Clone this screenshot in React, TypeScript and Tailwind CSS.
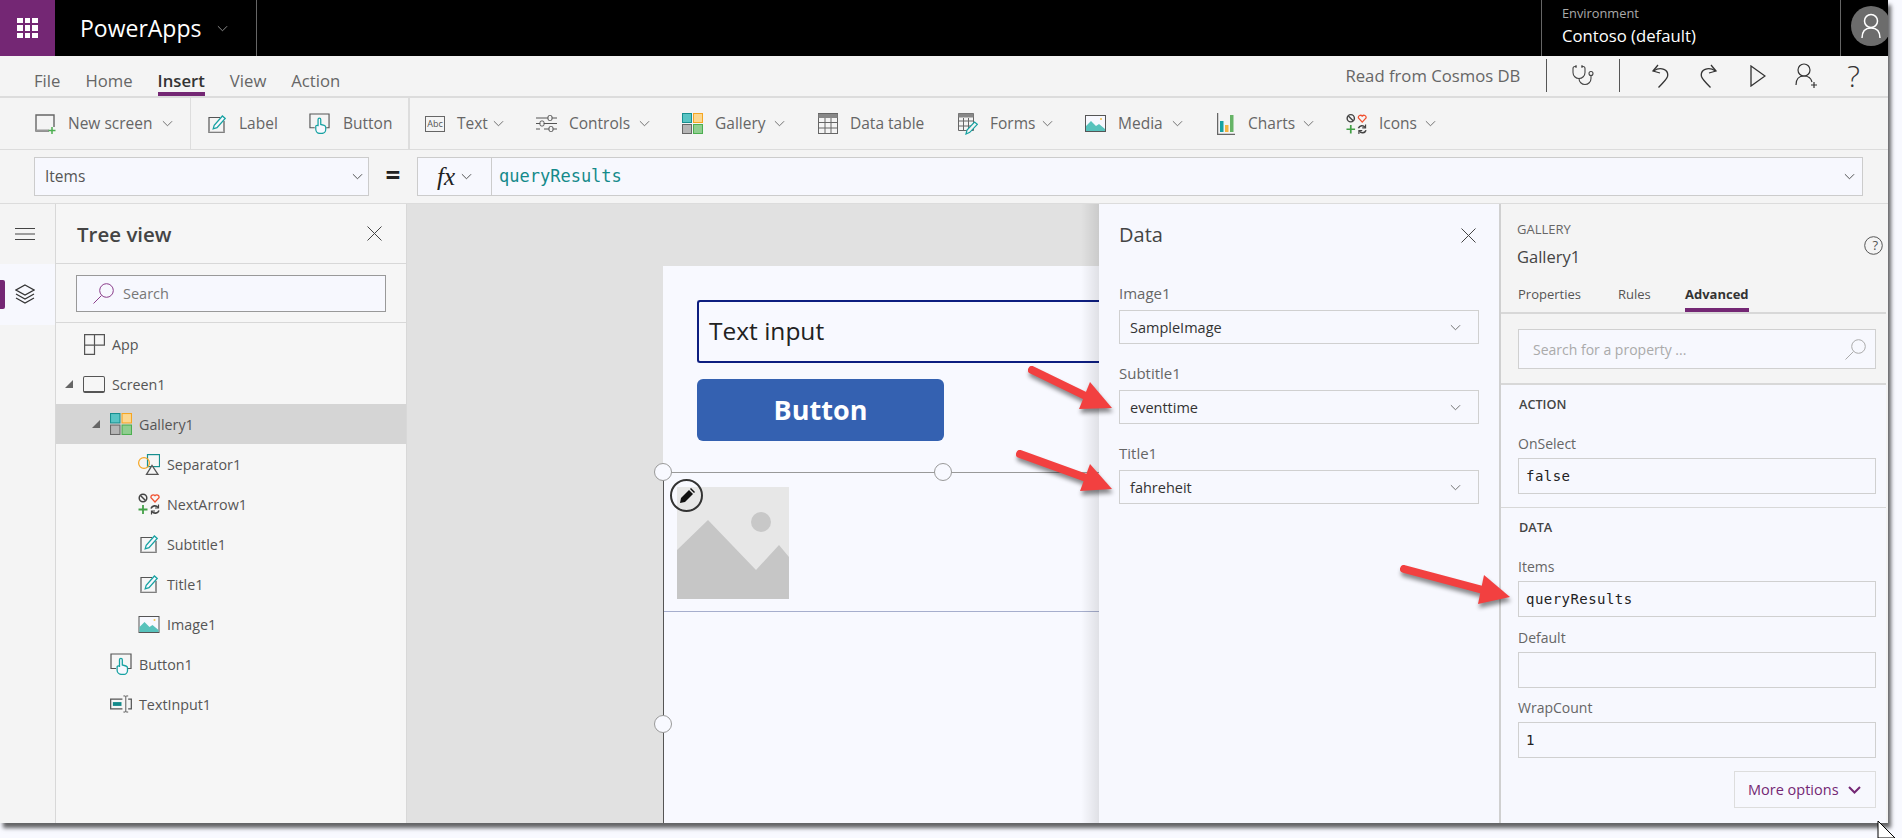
import { Stethoscope } from "lucide-react";
import type { ReactNode } from "react";

const Chev = ({ className = "", stroke = "#666" }: { className?: string; stroke?: string }) => (
  <svg className={className} width="11" height="7" viewBox="0 0 12 7" fill="none">
    <path d="M1 1l5 5 5-5" stroke={stroke} strokeWidth="1" />
  </svg>
);

const CloseX = () => (
  <svg width="15" height="15" viewBox="0 0 15 15" fill="none">
    <path d="M.5.5l14 14M14.5.5l-14 14" stroke="#444" strokeWidth="1" />
  </svg>
);

const NewScreenIcon = () => (
  <svg width="21" height="20" viewBox="0 0 21 20" fill="none">
    <path d="M14 17H1V1h18v12" stroke="#666" strokeWidth="1.4" />
    <path d="M1 16.5h13" stroke="#999" strokeWidth="2" />
    <path d="M17 13v7M13.5 16.5h7" stroke="#4caf50" strokeWidth="1.5" />
  </svg>
);

const EditIcon = ({ size = 18 }: { size?: number }) => (
  <svg width={size} height={size} viewBox="0 0 18 18" fill="none">
    <path d="M12 2.5H1v15h15V6" stroke="#555" strokeWidth="1.2" />
    <path d="M1 17h15" stroke="#aaa" strokeWidth="1" />
    <path d="M5.2 13.8l1-3.6L14.4 1l2.8 2.4-8.2 9.2z" stroke="#17a2a2" strokeWidth="1.3" fill="#f7f8fe" />
  </svg>
);

const HandIcon = ({ size = 22 }: { size?: number }) => (
  <svg width={size} height={size} viewBox="0 0 22 22" fill="none">
    <path d="M6 15.5H1V1h20v14.5h-3" stroke="#555" strokeWidth="1.2" />
    <path
      d="M9.5 14V6.8a1.4 1.4 0 012.8 0V12l3.6 1c1 .3 1.6 1 1.6 2v2.4a4 4 0 01-4 4h-2a4.4 4.4 0 01-4.4-4.4v-3c0-.8.8-1.3 2.4-1z"
      stroke="#17a2a2"
      strokeWidth="1.3"
      fill="#f7f8fe"
    />
  </svg>
);

const AbcIcon = () => (
  <span className="flex h-[16px] w-[21px] items-center justify-center border border-[#666] text-[9px] leading-none text-[#555]">
    Abc
  </span>
);

const SlidersIcon = () => (
  <svg width="21" height="21" viewBox="0 0 21 21" fill="none" stroke="#555" strokeWidth="1">
    <path d="M0 5h12M16 5h5M0 10.500h21M0 16h4M8 16h13" />
    <rect x="12" y="2.500" width="4" height="5" rx="1.500" fill="#f4f4f4" />
    <rect x="4" y="8" width="4" height="5" rx="1.500" fill="#f4f4f4" />
    <rect x="13" y="13.500" width="4" height="5" rx="1.500" fill="#f4f4f4" />
  </svg>
);

const GalleryIcon = ({ size = 21 }: { size?: number }) => (
  <svg width={size} height={size} viewBox="0 0 21 21">
    <rect x=".5" y=".5" width="9" height="9" fill="#58c4c4" stroke="#178f8f" />
    <rect x="11.500" y=".5" width="9" height="9" fill="#fcd78f" stroke="#f5a623" />
    <rect x=".5" y="11.500" width="9" height="9" fill="#b5b5b5" stroke="#666" />
    <rect x="11.500" y="11.500" width="9" height="9" fill="#8fce8f" stroke="#4caf50" />
  </svg>
);

const TableIcon = () => (
  <svg width="20" height="21" viewBox="0 0 20 21" fill="none" stroke="#666" strokeWidth="1">
    <rect x=".5" y=".5" width="19" height="20" />
    <path d="M.5 3h19" strokeWidth="4" stroke="#888" />
    <path d="M.5 9.500h19M.5 15h19M7 5v15M13 5v15" />
  </svg>
);

const FormsIcon = () => (
  <svg width="20" height="22" viewBox="0 0 20 22" fill="none">
    <path d="M.5.5h15v17H.5z" stroke="#666" />
    <path d="M.5 2.500h15" stroke="#888" strokeWidth="4" />
    <path d="M.5 8h15M.5 13h15M5.500 5v12M10.500 5v12" stroke="#666" />
    <path d="M8 21l1-4 7.500-8 2.800 2.300-7.500 8z" stroke="#17a2a2" strokeWidth="1.200" fill="#f4f4f4" />
  </svg>
);

const ImageIcon = ({ w = 21, h = 17 }: { w?: number; h?: number }) => (
  <svg width={w} height={h} viewBox="0 0 21 17">
    <rect x=".5" y=".5" width="20" height="16" fill="#f7f8fe" stroke="#555" />
    <path d="M1 16V11l5-5 5 5 3-2 6 5v2z" fill="#57c2bc" />
    <circle cx="16" cy="4" r="1" fill="#f5c04a" />
  </svg>
);

const ChartIcon = () => (
  <svg width="18" height="22" viewBox="0 0 18 22">
    <path d="M.5 0v21.500H18" fill="none" stroke="#666" strokeWidth="1.500" />
    <rect x="3" y="8" width="3.500" height="11" fill="#17a2a2" />
    <rect x="8" y="12" width="3.500" height="7" fill="#f5b342" />
    <rect x="13" y="2" width="3.500" height="17" fill="#66b466" />
  </svg>
);

const IconsIcon = ({ size = 22 }: { size?: number }) => (
  <svg width={size} height={size} viewBox="0 0 22 22" fill="none">
    <circle cx="5" cy="5" r="3.800" stroke="#444" strokeWidth="1.500" />
    <path d="M2.500 2.500l5 5" stroke="#444" strokeWidth="1.500" />
    <path d="M17 9l-4-4.300a2.300 2.300 0 014-2 2.300 2.300 0 014 2z" stroke="#f0502f" strokeWidth="1.300" />
    <path d="M5 12v9M.5 16.500h9" stroke="#43a047" strokeWidth="1.800" />
    <path d="M13 15.500a4 4 0 017-1M21 17.500a4 4 0 01-7 1" stroke="#444" strokeWidth="1.600" />
    <path d="M20.500 11.500v3.500h-3.500M13.500 21.500V18h3.500" stroke="#444" strokeWidth="1.200" />
  </svg>
);

const AppIcon = () => (
  <svg width="21" height="21" viewBox="0 0 21 21" fill="none" stroke="#555" strokeWidth="1.200">
    <path d="M.6.6h19.800v10.500H10.500v9.300H.6zM.6 11.100h9.900M10.500.6v10.500" />
  </svg>
);

const ScreenIcon = () => (
  <span className="block h-[17px] w-[22px] rounded-[2px] border border-[#555] border-b-2" />
);

const ShapesIcon = () => (
  <svg width="22" height="21" viewBox="0 0 22 21" fill="none">
    <rect x="9.500" y=".6" width="12" height="12" stroke="#178f8f" strokeWidth="1.200" fill="#f6f6f6" />
    <circle cx="6" cy="9" r="5.400" stroke="#f5a623" strokeWidth="1.200" />
    <path d="M8.500 20.400l5.500-9 6 9z" stroke="#555" strokeWidth="1.300" fill="#f6f6f6" />
  </svg>
);

const TextInputIcon = () => (
  <svg width="23" height="18" viewBox="0 0 23 18" fill="none">
    <path d="M13 4H.7v10H13M19 4h3.300v10H19" stroke="#555" strokeWidth="1.300" />
    <rect x="3" y="7" width="9" height="4" fill="#138a8a" />
    <path d="M14 .6h2l.5.5.5-.5h2M16.500 1v16M14 17.400h2l.5-.5.5.5h2" stroke="#555" strokeWidth="1" />
  </svg>
);

const Magnifier = ({ stroke, size = 21 }: { stroke: string; size?: number }) => (
  <svg width={size} height={size} viewBox="0 0 21 21" fill="none" stroke={stroke} strokeWidth="1">
    <circle cx="13.500" cy="7.500" r="6.800" />
    <path d="M8.500 12.500L.5 20.500" />
  </svg>
);

const toolItems: { icon: ReactNode; label: string; text: string; chev: boolean; iconBox: string }[] = [
  { icon: <AbcIcon />, label: "Text", text: "w-[29px]", chev: true, iconBox: "w-[20px]" },
  { icon: <SlidersIcon />, label: "Controls", text: "w-[63px]", chev: true, iconBox: "w-[21px]" },
  { icon: <GalleryIcon />, label: "Gallery", text: "w-[52px]", chev: true, iconBox: "w-[21px]" },
  { icon: <TableIcon />, label: "Data table", text: "w-[76px]", chev: false, iconBox: "w-[21px]" },
  { icon: <FormsIcon />, label: "Forms", text: "w-[45px]", chev: true, iconBox: "w-[20px]" },
  { icon: <ImageIcon />, label: "Media", text: "w-[47px]", chev: true, iconBox: "w-[21px]" },
  { icon: <ChartIcon />, label: "Charts", text: "w-[48px]", chev: true, iconBox: "w-[21px]" },
  { icon: <IconsIcon />, label: "Icons", text: "w-[39px]", chev: true, iconBox: "w-[21px]" },
];

const treeRows: { name: string; pad: string; icon: ReactNode; open?: boolean; selected?: boolean }[] = [
  { name: "App", pad: "pl-[9px]", icon: <AppIcon /> },
  { name: "Screen1", pad: "pl-[9px]", icon: <ScreenIcon />, open: true },
  { name: "Gallery1", pad: "pl-[36px]", icon: <GalleryIcon size={22} />, open: true, selected: true },
  { name: "Separator1", pad: "pl-[64px]", icon: <ShapesIcon /> },
  { name: "NextArrow1", pad: "pl-[64px]", icon: <IconsIcon /> },
  { name: "Subtitle1", pad: "pl-[64px]", icon: <EditIcon /> },
  { name: "Title1", pad: "pl-[64px]", icon: <EditIcon /> },
  { name: "Image1", pad: "pl-[64px]", icon: <ImageIcon w={22} h={17} /> },
  { name: "Button1", pad: "pl-[36px]", icon: <HandIcon /> },
  { name: "TextInput1", pad: "pl-[36px]", icon: <TextInputIcon /> },
];

const DataSelect = ({ label, value, top }: { label: string; value: string; top: string }) => (
  <div className={top}>
    <div className="h-[20px] text-[15px] leading-[19px] text-[#666]">{label}</div>
    <div className="mt-[6px] flex h-[34px] items-center justify-between border border-[#d0d0d0] pl-[10px] pr-[17px] text-[14.500px] text-[#333]">
      <span className="pt-[1px]">{value}</span>
      <Chev />
    </div>
  </div>
);

const PropField = ({ label, value, top }: { label: string; value?: string; top: string }) => (
  <div className={top}>
    <div className="h-[18px] text-[14px] leading-[18px] text-[#666]">{label}</div>
    <div className="mt-[5px] flex h-[36px] items-center border border-[#d0d0d0] pl-[7px] font-['DejaVu_Sans_Mono',monospace] text-[14px] tracking-[0.45px] text-[#222]">
      {value}
    </div>
  </div>
);

const Arrow = ({ className, width, height, tail, tip, a, b }: {
  className: string;
  width: number;
  height: number;
  tail: [number, number];
  tip: [number, number];
  a: [number, number];
  b: [number, number];
}) => {
  const mid: [number, number] = [(a[0] + b[0]) / 2, (a[1] + b[1]) / 2];
  return (
    <svg
      className={`absolute drop-shadow-[1px_4px_2px_rgba(0,0,0,0.45)] ${className}`}
      width={width}
      height={height}
      viewBox={`0 0 ${width} ${height}`}
      fill="none"
    >
      <path d={`M${tail[0]} ${tail[1]}L${mid[0]} ${mid[1]}`} stroke="#f24040" strokeWidth="8" strokeLinecap="round" />
      <path d={`M${a[0]} ${a[1]}L${tip[0]} ${tip[1]}L${b[0]} ${b[1]}z`} fill="#f24040" />
    </svg>
  );
};

const Handle = ({ className }: { className: string }) => (
  <span className={`absolute h-[18px] w-[18px] rounded-full border border-[#999] bg-[#f8f9ff] ${className}`} />
);

export default function App() {
  return (
    <div className="relative h-[838px] w-[1902px] overflow-hidden bg-[#f8f9ff] font-['Open_Sans',sans-serif]">
      <div className="flex h-[823px] w-[1888px] flex-col bg-[#f4f4f4] shadow-[3px_5px_4px_rgba(0,0,0,0.6)]">
        {/* top bar */}
        <header className="flex h-14 shrink-0 bg-black text-white">
          <div className="flex w-[55px] items-center justify-center bg-[#742774]">
            <div className="grid grid-cols-3 gap-[2px]">
              {Array.from({ length: 9 }).map((_, i) => (
                <span key={i} className="h-[5.500px] w-[5.500px] bg-white" />
              ))}
            </div>
          </div>
          <div className="flex w-[202px] items-center border-r border-[#666] pl-[25px]">
            <span className="text-[23px] leading-none">PowerApps</span>
            <Chev className="ml-[16px]" stroke="#999" />
          </div>
          <div className="ml-auto flex w-[300px] flex-col border-x border-[#666] pl-[20px]">
            <span className="mt-[4px] text-[12.800px] leading-[18px] text-[#aaa]">Environment</span>
            <span className="mt-[3px] text-[16.700px] leading-[22px]">Contoso (default)</span>
          </div>
          <div className="w-[47px] overflow-hidden pl-[10px] pt-[6px]">
            <div className="flex h-10 w-10 items-center justify-center rounded-full bg-[#6c6c6c]">
              <svg width="20" height="26" viewBox="0 0 20 26" fill="none" stroke="#fff" strokeWidth="1.500">
                <circle cx="10" cy="8" r="6.500" />
                <path d="M1 25c0-6 3-10 9-10s9 4 9 10" />
              </svg>
            </div>
          </div>
        </header>

        {/* menu row */}
        <div className="flex h-[42px] shrink-0 justify-between border-b-2 border-[#dcdcdc] pl-[34px] pr-[28px]">
          <nav className="flex gap-[25px] pt-[14px] text-[16.700px] text-[#666]">
            {["File", "Home", "Insert", "View", "Action"].map((t) => (
              <div key={t} className="flex flex-col">
                <span className={`h-[22px] leading-[22px] ${t === "Insert" ? "font-semibold text-[#333]" : ""}`}>{t}</span>
                <span className={`h-1 ${t === "Insert" ? "bg-[#742774]" : ""}`} />
              </div>
            ))}
          </nav>
          <div className="mt-[3px] flex h-[33px] items-center text-[#444]">
            <span className="mr-[26px] text-[16.700px] text-[#666]">Read from Cosmos DB</span>
            <span className="h-[33px] w-px bg-[#555]" />
            <Stethoscope className="mx-[24px] h-[25px] w-[24px]" strokeWidth={1.100} />
            <span className="h-[33px] w-px bg-[#555]" />
            <svg className="ml-[31px]" width="18" height="24" viewBox="0 0 18 24" fill="none" stroke="#333" strokeWidth="1.300">
              <path d="M7 1L2 7l7 2" />
              <path d="M2.500 7C10 2 18 6 16.500 12.500 15.800 15 12 19 7.500 23.500" />
            </svg>
            <svg className="ml-[31px]" width="18" height="24" viewBox="0 0 18 24" fill="none" stroke="#333" strokeWidth="1.300">
              <path d="M11 1l5 6-7 2" />
              <path d="M15.500 7C8 2 0 6 1.500 12.500 2.200 15 6 19 10.500 23.500" />
            </svg>
            <svg className="ml-[32px]" width="16" height="22" viewBox="0 0 16 22" fill="none" stroke="#333" strokeWidth="1.300">
              <path d="M1 1l14 10L1 21z" />
            </svg>
            <svg className="ml-[29px]" width="23" height="26" viewBox="0 0 23 26" fill="none" stroke="#333" strokeWidth="1.200">
              <circle cx="9" cy="7" r="6" />
              <path d="M1 22c0-6 3-9 8-9s7 2 8 6" />
              <path d="M19 19v6M16 22h6" />
            </svg>
            <span className="ml-[29px] text-[30px] font-light leading-none text-[#333]">?</span>
          </div>
        </div>

        {/* toolbar */}
        <div className="flex h-[52px] shrink-0 items-stretch border-b border-[#dcdcdc] text-[15.500px] text-[#666]">
          <div className="flex w-[191px] items-center gap-[12px] border-r border-[#ddd] pl-[35px]">
            <NewScreenIcon />
            <span className="flex w-[87px] items-center whitespace-nowrap">New screen</span>
            <Chev className="-ml-[5px]" />
          </div>
          <div className="flex w-[219px] items-center border-r-2 border-[#ddd] pl-[17px]">
            <EditIcon />
            <span className="ml-[13px] w-[38px]">Label</span>
            <span className="ml-[32px]"><HandIcon size={21} /></span>
            <span className="ml-[13px] w-[49px]">Button</span>
          </div>
          <div className="flex items-center gap-[32px] pl-[15px]">
            {toolItems.map((item) => (
              <div key={item.label} className="flex items-center">
                <span className={`flex shrink-0 justify-center ${item.iconBox}`}>{item.icon}</span>
                <span className={`ml-[12px] whitespace-nowrap ${item.text}`}>{item.label}</span>
                {item.chev && <Chev className="ml-[7px]" />}
              </div>
            ))}
          </div>
        </div>

        {/* formula bar */}
        <div className="flex h-[54px] shrink-0 items-start border-b border-[#dcdcdc] pl-[34px] pr-[25px] pt-[7px]">
          <div className="flex h-[39px] w-[335px] items-center justify-between border border-[#ccc] bg-[#f7f8fe] pl-[10px] pr-[5px] text-[15.500px] text-[#555]">
            <span>Items</span>
            <Chev stroke="#444" />
          </div>
          <div className="flex h-[39px] w-[48px] items-center justify-center pb-[2px] text-[26px] font-bold text-[#222]">=</div>
          <div className="flex h-[39px] flex-1 border border-[#ccc] bg-[#f7f8fe]">
            <div className="flex w-[74px] items-center justify-center gap-[6px] border-r border-[#ccc]">
              <span className="font-['Liberation_Serif',serif] text-[25px] italic leading-none text-[#222]">fx</span>
              <Chev stroke="#444" />
            </div>
            <div className="flex flex-1 items-center justify-between px-[7px]">
              <span className="font-['DejaVu_Sans_Mono',monospace] text-[17px] text-[#148a8a]">queryResults</span>
              <Chev stroke="#444" />
            </div>
          </div>
        </div>

        {/* main */}
        <div className="flex min-h-0 flex-1">
          <aside className="w-[56px] shrink-0 border-r border-[#d8d8d8]">
            <div className="flex h-[60px] items-center justify-center">
              <svg className="ml-[10px] mr-[16px]" width="20" height="12" viewBox="0 0 20 12" stroke="#444" strokeWidth="1">
                <path d="M0 .5h20M0 6h20M0 11.500h20" />
              </svg>
            </div>
            <div className="flex h-[61px] items-center bg-[#f7f8fe]">
              <span className="h-[29px] w-[5px] rounded-r-[2px] bg-[#742774]" />
              <svg className="ml-[10px]" width="20" height="24" viewBox="0 0 20 24" fill="none" stroke="#333" strokeWidth="1.200">
                <path d="M10 2l9 5-9 5-9-5z" />
                <path d="M1 11l9 5 9-5M1 15l9 5 9-5" />
              </svg>
            </div>
          </aside>

          <section className="w-[351px] shrink-0 border-r border-[#d8d8d8] bg-[#f6f6f6]">
            <div className="flex h-[60px] items-center justify-between border-b border-[#d8d8d8] pl-[21px] pr-[24px]">
              <span className="pt-[2px] text-[20.500px] font-semibold text-[#444]">Tree view</span>
              <CloseX />
            </div>
            <div className="h-[59px] border-b border-[#d8d8d8] px-[20px] pt-[11px]">
              <div className="flex h-[37px] items-center border border-[#999] bg-[#f7f8fe] pl-[16px] text-[14.500px] text-[#777]">
                <Magnifier stroke="#8a3c8a" />
                <span className="ml-[9px] pt-[1px]">Search</span>
              </div>
            </div>
            <ul className="pt-[1px] text-[14.300px] text-[#555]">
              {treeRows.map((row) => (
                <li
                  key={row.name}
                  className={`flex h-10 items-center ${row.pad} ${row.selected ? "bg-[#d5d5d5]" : ""}`}
                >
                  <span className="flex w-[18px] shrink-0">
                    {row.open && <span className="h-0 w-0 border-b-[8px] border-l-[8px] border-b-[#666] border-l-transparent" />}
                  </span>
                  <span className="flex w-[22px] shrink-0 justify-center">{row.icon}</span>
                  <span className="ml-[7px] pt-[1px]">{row.name}</span>
                </li>
              ))}
            </ul>
          </section>

          {/* canvas */}
          <main className="relative w-[692px] shrink-0 overflow-hidden bg-[#e1e1e1] pl-[256px] pt-[62px]">
            <div className="h-full bg-[#f8f9ff] pl-[34px] pt-[34px]">
              <div className="flex h-[63px] items-center rounded-l-[3px] border-y-2 border-l-2 border-[#0d1e80] pl-[10px] text-[24.500px] text-[#222]">
                Text input
              </div>
              <div className="mt-[16px] flex h-[62px] w-[247px] items-center justify-center rounded-[6px] bg-[#3461b1] text-[27px] font-bold text-white">
                Button
              </div>
              <div className="relative -ml-[34px] mt-[31px] h-[400px] border-l border-t border-l-[#555] border-t-[#999] pl-[13px] pt-[14px]">
                <Handle className="-left-[10px] -top-[10px]" />
                <Handle className="left-[270px] -top-[10px]" />
                <Handle className="-left-[10px] top-[242px]" />
                <div className="relative h-[112px] w-[112px] overflow-hidden bg-[#e7e7e7]">
                  <svg className="absolute inset-0" width="112" height="112" viewBox="0 0 112 112">
                    <circle cx="84" cy="35" r="10" fill="#c8c8c8" />
                    <path d="M0 63l31-30 48 50 23-25 10 12v42H0z" fill="#c6c6c6" />
                  </svg>
                </div>
                <span className="absolute left-[6px] top-[6px] flex h-[33px] w-[33px] items-center justify-center rounded-full border-2 border-[#333]">
                  <svg width="16" height="16" viewBox="0 0 16 16" fill="#111">
                    <path d="M1 15l1-5 8-8 4 4-8 8zM11 1l1-1 4 4-1 1z" />
                  </svg>
                </span>
                <div className="absolute left-0 right-0 top-[138px] h-px bg-[#a6aecd]" />
              </div>
            </div>
            <span className="absolute bottom-0 right-0 top-0 w-[18px] bg-gradient-to-r from-transparent to-black/10" />
          </main>

          {/* data panel */}
          <section className="w-[400px] shrink-0 bg-[#f7f8fe] px-[20px]">
            <div className="flex h-[62px] items-center justify-between pr-[3px]">
              <span className="text-[20px] text-[#444]">Data</span>
              <CloseX />
            </div>
            <DataSelect label="Image1" value="SampleImage" top="mt-[18px]" />
            <DataSelect label="Subtitle1" value="eventtime" top="mt-[20px]" />
            <DataSelect label="Title1" value="fahreheit" top="mt-[20px]" />
          </section>

          {/* properties panel */}
          <section className="w-[389px] shrink-0 border-x-2 border-l-[#d0d0d0] border-r-transparent">
            <div className="relative h-[110px] border-b-2 border-[#d8d8d8] pl-[16px] pt-[16px]">
              <div className="h-[18px] text-[13px] leading-[18px] text-[#666]">GALLERY</div>
              <div className="mt-[7px] h-[24px] text-[16.500px] leading-[24px] text-[#444]">Gallery1</div>
              <svg className="absolute right-[3px] top-[32px]" width="19" height="19" viewBox="0 0 19 19" fill="none" stroke="#555">
                <circle cx="9.500" cy="9.500" r="8.800" />
              </svg>
              <span className="absolute right-[8px] top-[33px] text-[13px] leading-[17px] text-[#555]">?</span>
              <div className="absolute bottom-0 left-[17px] flex text-[13px] text-[#555]">
                <span className="h-[30px] w-[100px] pt-[3px]">Properties</span>
                <span className="h-[30px] w-[67px] pt-[3px]">Rules</span>
                <span className="h-[30px] border-b-4 border-[#742774] pt-[3px] font-bold text-[#333]">Advanced</span>
              </div>
            </div>
            <div className="h-[71px] border-b-2 border-[#d8d8d8] pl-[17px] pr-[10px] pt-[15px]">
              <div className="flex h-[40px] items-center justify-between border border-[#d0d0d0] bg-[#f7f8fe] pl-[14px] pr-[9px] text-[14px] text-[#aaa]">
                <span>Search for a property ...</span>
                <Magnifier stroke="#aaa" />
              </div>
            </div>
            <div className="h-[123px] border-b border-[#d8d8d8] bg-[#f7f8fe] pl-[17px] pr-[10px] pt-[10px]">
              <div className="h-[18px] pl-[1px] text-[12.700px] font-semibold leading-[18px] text-[#444]">ACTION</div>
              <PropField label="OnSelect" value="false" top="mt-[22px]" />
            </div>
            <div className="flex h-[315px] flex-col bg-[#f7f8fe] pl-[17px] pr-[10px] pt-[10px]">
              <div className="h-[18px] pl-[1px] text-[12.700px] font-semibold leading-[18px] text-[#444]">DATA</div>
              <PropField label="Items" value="queryResults" top="mt-[22px]" />
              <PropField label="Default" top="mt-[12px]" />
              <PropField label="WrapCount" value="1" top="mt-[11px]" />
              <div className="mt-[13px] flex h-[37px] w-[142px] items-center gap-[12px] self-end border border-[#ddd] pl-[13px] text-[14.500px] text-[#742774]">
                <span className="w-[88px] whitespace-nowrap">More options</span>
                <svg width="13" height="8" viewBox="0 0 13 8" fill="none" stroke="#742774" strokeWidth="2">
                  <path d="M1 1l5.500 5.500L12 1" />
                </svg>
              </div>
            </div>
          </section>
        </div>
      </div>

      {/* annotation arrows, over everything */}
      <Arrow className="left-[1020px] top-[360px]" width={100} height={60} tail={[12, 10]} tip={[92, 48]} a={[70, 22]} b={[59, 49]} />
      <Arrow className="left-[1005px] top-[440px]" width={115} height={60} tail={[15, 14]} tip={[107, 49]} a={[85, 24]} b={[75, 51]} />
      <Arrow className="left-[1392px] top-[560px]" width={125} height={55} tail={[12, 9]} tip={[118, 37]} a={[92, 15]} b={[86, 44]} />

      {/* mouse cursor */}
      <svg className="absolute left-[1877px] top-[821px]" width="19" height="17" viewBox="0 0 19 17">
        <path d="M1 0l17 17H1z" fill="#fff" stroke="#000" strokeWidth="1" />
      </svg>
    </div>
  );
}
